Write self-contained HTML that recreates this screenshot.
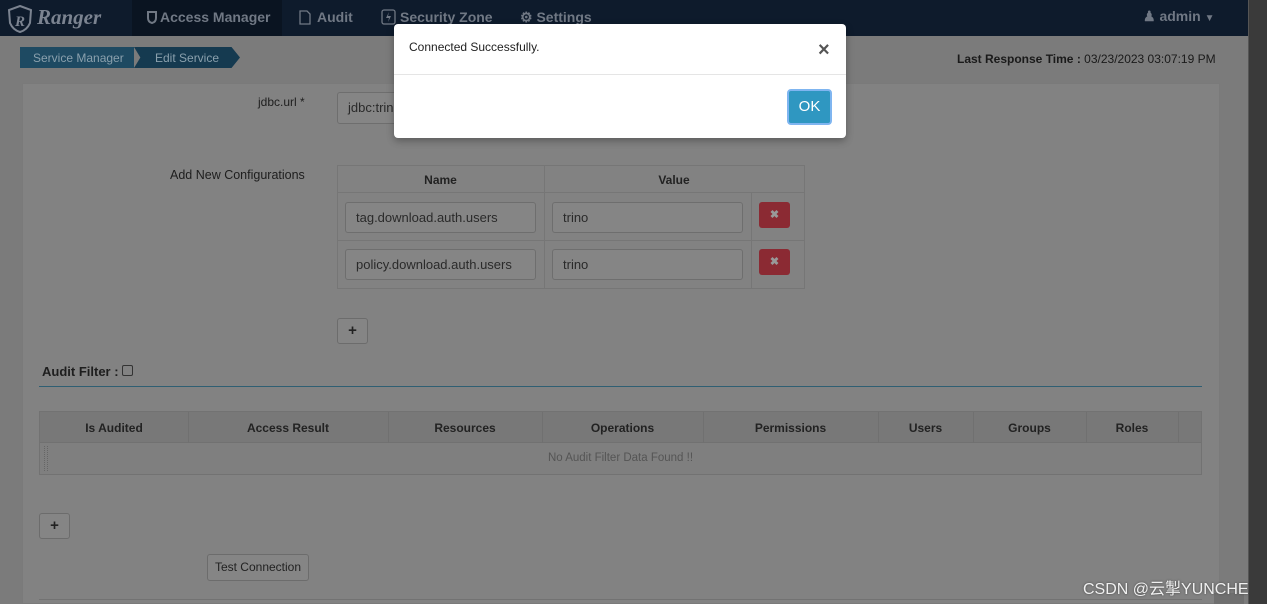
<!DOCTYPE html>
<html><head><meta charset="utf-8"><style>
*{box-sizing:border-box;margin:0;padding:0}
html,body{width:1267px;height:604px;overflow:hidden}
body{background:#7b7b7b;font-family:"Liberation Sans","Noto Sans CJK SC",sans-serif;position:relative;color:#1e1e1e}
.a{position:absolute}
.nav{left:0;top:0;width:1248px;height:36px;background:#0e1b2c}
.nav span{position:absolute;top:9px;color:#707884;font-weight:bold;font-size:14px}
.strip{left:1248px;top:0;width:19px;height:604px;background:#3a3a3a;border-left:1px solid #555}
.panel{left:22px;top:83px;width:1198px;height:521px;background:#828282;border:1px solid #7a7a7a}
.inp{background:#858585;border:1px solid #6e6e6e;border-radius:3px;font-size:13px;color:#2a2a2a;padding:7px 0 0 10px}
.th{font-size:12px;font-weight:bold;color:#222;text-align:center}
.btn{background:#858585;border:1px solid #6c6c6c;border-radius:3px;font-size:12px;color:#222;text-align:center}
.del{width:31px;height:26px;background:#8b2a33;border-radius:3px;color:#999;font-size:11px;text-align:center;line-height:26px;font-weight:bold}
</style></head><body>
<div class="a nav">
 <svg class="a" style="left:7px;top:5px" width="26" height="28" viewBox="0 0 26 28"><path d="M13 1 L24 5 L23 18 Q20 25 13 27 Q6 25 3 18 L2 5 Z" fill="none" stroke="#7b8390" stroke-width="2"/><text x="8" y="21" font-size="15" font-weight="bold" font-style="italic" fill="#7b8390" font-family="Liberation Serif">R</text></svg>
 <span style="left:37px;top:5px;color:#7b8390;font-size:21px;font-family:'Liberation Serif',serif;font-style:italic">Ranger</span>
 <div class="a" style="left:132px;top:0;width:150px;height:36px;background:#0a1421"></div>
 <svg class="a" style="left:147px;top:11px" width="10" height="13" viewBox="0 0 10 13"><path d="M1 1 H9 V7 Q9 11 5 12 Q1 11 1 7 Z" fill="none" stroke="#707884" stroke-width="2"/></svg>
 <span style="left:160px">Access Manager</span>
 <svg class="a" style="left:299px;top:10px" width="12" height="15" viewBox="0 0 12 15"><path d="M1 1 H8 L11 4 V14 H1 Z" fill="none" stroke="#707884" stroke-width="1.3"/></svg>
 <span style="left:317px">Audit</span>
 <svg class="a" style="left:381px;top:9px" width="15" height="16" viewBox="0 0 15 16"><rect x="1" y="1" width="13" height="14" rx="2" fill="none" stroke="#707884" stroke-width="1.3"/><path d="M8 3 L5 9 H8 L7 13 L10 7 H7 Z" fill="#707884"/></svg>
 <span style="left:400px">Security Zone</span>
 <span style="left:520px">&#9881; Settings</span>
 <span style="left:1143px;top:8px">&#9823; admin <span style="position:static;font-size:10px">&#9660;</span></span>
</div>
<div class="a strip"></div>
<div class="a" style="left:20px;top:47px;width:114px;height:21px;background:#1e4a62;color:#8aa0ad;font-size:12px;padding:4px 0 0 13px">Service Manager</div>
<div class="a" style="left:134px;top:47px;width:106px;height:21px;background:#153a50;color:#8aa0ad;font-size:12px;padding:4px 0 0 21px;clip-path:polygon(0 0,92% 0,100% 50%,92% 100%,0 100%,6% 50%)">Edit Service</div>
<div class="a" style="left:957px;top:52px;font-size:12px;color:#1a1a1a"><b>Last Response Time :</b> 03/23/2023 03:07:19 PM</div>
<div class="a panel"></div>
<div class="a" style="left:258px;top:95px;font-size:12px">jdbc.url *</div>
<div class="a inp" style="left:337px;top:92px;width:80px;height:32px">jdbc:trin</div>
<div class="a" style="left:170px;top:168px;font-size:12.5px">Add New Configurations</div>
<div class="a" style="left:337px;top:165px;width:468px;height:124px;border:1px solid #767676"></div>
<div class="a" style="left:337px;top:192px;width:468px;height:1px;background:#767676"></div>
<div class="a" style="left:337px;top:240px;width:468px;height:1px;background:#767676"></div>
<div class="a" style="left:544px;top:165px;width:1px;height:124px;background:#767676"></div>
<div class="a" style="left:751px;top:193px;width:1px;height:96px;background:#767676"></div>
<div class="a th" style="left:337px;top:173px;width:207px">Name</div>
<div class="a th" style="left:544px;top:173px;width:260px">Value</div>
<div class="a inp" style="left:345px;top:202px;width:191px;height:31px">tag.download.auth.users</div>
<div class="a inp" style="left:552px;top:202px;width:191px;height:31px">trino</div>
<div class="a del" style="left:759px;top:202px">✖</div>
<div class="a inp" style="left:345px;top:249px;width:191px;height:31px">policy.download.auth.users</div>
<div class="a inp" style="left:552px;top:249px;width:191px;height:31px">trino</div>
<div class="a del" style="left:759px;top:249px">✖</div>
<div class="a btn" style="left:337px;top:318px;width:31px;height:26px;font-size:15px;font-weight:bold;line-height:24px">+</div>
<div class="a" style="left:42px;top:364px;font-size:13px;font-weight:bold">Audit Filter : <span style="display:inline-block;width:11px;height:11px;border:1px solid #333;border-radius:2px"></span></div>
<div class="a" style="left:39px;top:386px;width:1163px;height:1px;background:#2f5f73"></div>
<div class="a" style="left:39px;top:411px;width:1163px;height:64px;border:1px solid #727272;background:#7f7f7f"></div>
<div class="a" style="left:40px;top:412px;width:1161px;height:31px;background:#787878;border-bottom:1px solid #717171"></div>
<div class="a th" style="left:40px;top:421px;width:148px">Is Audited</div>
<div class="a th" style="left:188px;top:421px;width:200px">Access Result</div>
<div class="a th" style="left:388px;top:421px;width:154px">Resources</div>
<div class="a th" style="left:542px;top:421px;width:161px">Operations</div>
<div class="a th" style="left:703px;top:421px;width:175px">Permissions</div>
<div class="a th" style="left:878px;top:421px;width:95px">Users</div>
<div class="a th" style="left:973px;top:421px;width:113px">Groups</div>
<div class="a th" style="left:1086px;top:421px;width:92px">Roles</div>
<div class="a" style="left:188px;top:412px;width:1px;height:31px;background:#707070"></div>
<div class="a" style="left:388px;top:412px;width:1px;height:31px;background:#707070"></div>
<div class="a" style="left:542px;top:412px;width:1px;height:31px;background:#707070"></div>
<div class="a" style="left:703px;top:412px;width:1px;height:31px;background:#707070"></div>
<div class="a" style="left:878px;top:412px;width:1px;height:31px;background:#707070"></div>
<div class="a" style="left:973px;top:412px;width:1px;height:31px;background:#707070"></div>
<div class="a" style="left:1086px;top:412px;width:1px;height:31px;background:#707070"></div>
<div class="a" style="left:1178px;top:412px;width:1px;height:31px;background:#707070"></div>
<div class="a" style="left:44px;top:446px;width:4px;height:25px;border-left:1px dotted #666;border-right:1px dotted #666"></div>
<div class="a" style="left:40px;top:452px;width:1161px;text-align:center;font-size:11.5px;color:#555">No Audit Filter Data Found !!</div>
<div class="a btn" style="left:39px;top:513px;width:31px;height:26px;font-size:15px;font-weight:bold;line-height:24px">+</div>
<div class="a btn" style="left:207px;top:554px;width:102px;height:27px;line-height:25px">Test Connection</div>
<div class="a" style="left:39px;top:599px;width:1163px;height:1px;background:#727272"></div>
<div class="a" style="left:1214px;top:593px;width:30px;height:11px;background:#6f6f6f"></div>
<div class="a" style="left:1083px;top:575px;font-size:16px;color:#f0f0f0;text-shadow:0 0 2px #444">CSDN @云掣YUNCHE</div>
<div class="a" style="left:394px;top:24px;width:452px;height:114px;background:#fff;border-radius:4px;box-shadow:0 3px 8px rgba(0,0,0,.3)">
 <div class="a" style="left:15px;top:16px;font-size:12px;color:#222">Connected Successfully.</div>
 <div class="a" style="left:424px;top:15px;font-size:20px;font-weight:bold;color:#555">×</div>
 <div class="a" style="left:0;top:50px;width:452px;height:1px;background:#e5e5e5"></div>
 <div class="a" style="left:393px;top:65px;width:45px;height:36px;background:#2f97c1;border:2px solid #7fb5f0;border-radius:4px;color:#fff;font-size:15px;text-align:center;line-height:32px">OK</div>
</div>
</body></html>
